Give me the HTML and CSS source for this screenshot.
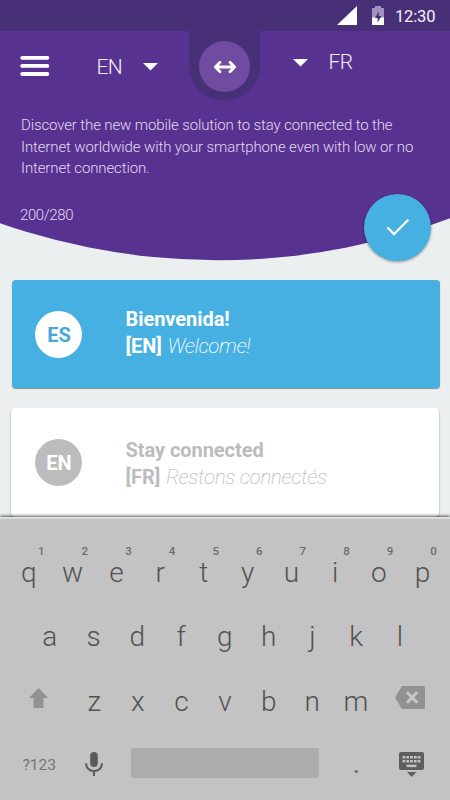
FILE: index.html
```html
<!DOCTYPE html>
<html lang="en">
<head>
<meta charset="utf-8">
<title>Translator</title>
<link rel="stylesheet" href="styles.css">
</head>
<body>
<div class="phone">
  <div class="status">
    <svg class="signal" width="20" height="19" viewBox="0 0 20 19"><path d="M20 0V19H0Z"/></svg>
    <svg class="battery" width="12" height="20" viewBox="0 0 12 20"><path class="dim" d="M3 2V0H9V2H12V13H0V2Z"/><path d="M0 11.5H12V19H0Z"/><path class="bolt" d="M6.7 5.5L3 12H5.6V16.5L9.5 10H6.7Z"/></svg>
    <span class="clock">12:30</span>
  </div>
  <header class="header">
    <svg class="arc" width="450" height="230" viewBox="0 31 450 230"><circle cx="218" cy="-400" r="660.3"/></svg>
    <div class="toolbar">
      <svg class="menu" width="30" height="22" viewBox="0 0 30 22"><path d="M2.2 2.8H27.4M2.2 10.9H27.4M2.2 19H27.4"/></svg>
      <span class="lang from">EN</span>
      <svg class="caret caret-from" width="15" height="8" viewBox="0 0 15 8"><path d="M0 0H15L7.5 7.5Z"/></svg>
      <div class="swap"><div class="swap-disc">
        <svg width="24" height="14" viewBox="0 0 24 14"><path d="M2.5 7H21.5M7 2.3L2.3 7L7 11.7M17 2.3L21.7 7L17 11.7"/></svg>
      </div></div>
      <svg class="caret caret-to" width="15" height="8" viewBox="0 0 15 8"><path d="M0 0H15L7.5 7.5Z"/></svg>
      <span class="lang to">FR</span>
    </div>
    <p class="message"><span>Discover the new mobile solution to stay connected to the</span><span>Internet worldwide with your smartphone even with low or no</span><span>Internet connection.</span></p>
    <div class="count">200/280</div>
    <div class="confirm"><svg width="24" height="19" viewBox="0 0 24 19"><path d="M1.5 9.5L8 16L22.3 1.7"/></svg></div>
  </header>
  <main class="cards">
    <article class="card active">
      <div class="badge">ES</div>
      <div class="text"><div class="title">Bienvenida!</div><div class="sub"><b>[EN]</b> <i>Welcome!</i></div></div>
    </article>
    <article class="card plain">
      <div class="badge">EN</div>
      <div class="text"><div class="title">Stay connected</div><div class="sub"><b>[FR]</b> <i>Restons connectés</i></div></div>
    </article>
  </main>
  <section class="keyboard">
    <div class="hints"><span>1</span><span>2</span><span>3</span><span>4</span><span>5</span><span>6</span><span>7</span><span>8</span><span>9</span><span>0</span></div>
    <div class="row r1"><span>q</span><span>w</span><span>e</span><span>r</span><span>t</span><span>y</span><span>u</span><span>i</span><span>o</span><span>p</span></div>
    <div class="row r2"><span>a</span><span>s</span><span>d</span><span>f</span><span>g</span><span>h</span><span>j</span><span>k</span><span>l</span></div>
    <div class="row r3">
      <svg class="shift" width="19" height="20" viewBox="0 0 19 20"><path d="M9.5 0L19 10H14.5V20H4.5V10H0Z"/></svg>
      <span>z</span><span>x</span><span>c</span><span>v</span><span>b</span><span>n</span><span>m</span>
      <svg class="delete" width="30" height="23" viewBox="0 0 30 23"><path d="M8 0H28.5Q30 0 30 1.5V21.5Q30 23 28.5 23H8Q7 23 6.4 22L0 11.5L6.4 1Q7 0 8 0Z"/><path class="x" d="M12 6.2L22.2 16.8M22.2 6.2L12 16.8"/></svg>
    </div>
    <div class="bottom">
      <span class="sym">?123</span>
      <svg class="mic" width="18" height="24" viewBox="0 0 18 24"><rect x="5.2" y="0" width="7.6" height="15" rx="3.8"/><path d="M1 11.2C1 16 4.5 19 9 19S17 16 17 11.2M9 19V24"/></svg>
      <div class="space"></div>
      <span class="dot">.</span>
      <svg class="kb" width="25" height="25" viewBox="0 0 25 25"><rect width="25" height="18" rx="2"/><path d="M8 20H17.5L12.7 25Z"/><path class="keys" d="M3.5 5.3H21.5M3.5 9.2H21.5"/><path class="bar" d="M7.5 13.9H17.5"/></svg>
    </div>
  </section>
</div>
</body>
</html>
```
FILE: styles.css
```css
* { box-sizing: border-box; }
body { margin: 0; font-family: Roboto, "Liberation Sans", sans-serif; }
.phone { width: 450px; height: 800px; overflow: hidden; background: #ebeff0; display: flex; flex-direction: column; }
svg { display: block; flex: none; }
span { white-space: nowrap; }

.status { height: 31px; background: #483078; display: flex; padding: 6px 0 0 337px; flex: none; }
.status svg { fill: #fff; }
.battery { margin-left: 15px; }
.battery .dim { fill: #a092bc; }
.battery .bolt { fill: #483078; }
.clock { margin: 1px 0 0 11px; width: 45px; font-size: 16.5px; line-height: 20px; font-weight: 400; letter-spacing: -0.15px; color: #f7f3fb; }

.header { position: relative; height: 230px; flex: none; color: #e4d9f0; }
.arc { position: absolute; left: 0; top: 0; fill: #573290; }
.toolbar { position: relative; height: 70px; display: flex; align-items: flex-start; }
.menu { margin: 24px 0 0 20px; fill: none; stroke: #fff; stroke-width: 3.8; stroke-linecap: round; }
.lang { font-size: 21px; line-height: 24px; font-weight: 300; color: #f4eef9; width: 28px; letter-spacing: -0.6px; }
.from { margin: 24px 0 0 46.5px; }
.caret { fill: #fff; }
.caret-from { margin: 32px 0 0 18px; }
.swap { width: 71px; height: 70px; margin-left: 31.5px; background: #483078; border-radius: 0 0 36px 36px; display: flex; justify-content: center; padding-top: 10px; }
.swap-disc { width: 51px; height: 51px; border-radius: 50%; background: #6f4c9f; display: flex; align-items: center; justify-content: center; padding-top: 1px; }
.swap svg { fill: none; stroke: #fff; stroke-width: 2.8; stroke-linecap: round; stroke-linejoin: round; }
.caret-to { margin: 28px 0 0 32.5px; }
.to { margin: 19px 0 0 21px; }
.message { position: relative; margin: 14px 0 0 21px; font-size: 15px; line-height: 21.6px; letter-spacing: -0.12px; font-weight: 300; display: flex; flex-direction: column; align-items: flex-start; }
.count { position: relative; margin: 25px 0 0 20px; font-size: 15px; line-height: 21px; letter-spacing: -0.4px; font-weight: 300; }
.confirm { position: absolute; left: 364px; top: 163px; width: 67px; height: 67px; border-radius: 50%; background: #47b0e2; box-shadow: 0 1px 3px rgba(0,0,0,.4); display: flex; align-items: center; justify-content: center; }
.confirm svg { fill: none; stroke: #fff; stroke-width: 2.3; }

.cards { padding: 19px 10px 0 12px; display: flex; flex-direction: column; gap: 20px; height: 256px; flex: none; }
.card { height: 109px; flex: none; border-radius: 4px; display: flex; padding-left: 23px; }
.active { background: #47b0e2; color: #fff; box-shadow: 0 1px 1px rgba(0,0,0,.4); height: 108px; }
.plain { background: #fff; color: #bcbcbc; box-shadow: 0 1px 2px rgba(0,0,0,.4); margin: 0 1px 0 -1px; padding-left: 24px; }
.badge { width: 47px; height: 47px; margin-top: 30.5px; border-radius: 50%; font-size: 20px; line-height: 48px; font-weight: 700; text-align: center; text-indent: 1px; background: #fff; color: #47a9d8; flex: none; }
.plain .badge { background: #bcbcbc; color: #fff; line-height: 49px; }
.text { margin: 26px 0 0 43.5px; font-size: 20px; line-height: 26.5px; white-space: nowrap; }
.plain .text { margin-top: 29px; }
.title, .sub b { font-weight: 700; letter-spacing: -0.05px; }
.sub i { font-weight: 100; -webkit-text-stroke: .2px currentColor; margin-left: 1px; }

.keyboard { flex: 1; background: #c3c3c3; border-top: 2px solid #dedede; box-shadow: 0 -1px 3px rgba(0,0,0,.65); position: relative; padding-left: 7px; color: #525252; }
.hints { display: grid; grid-template-columns: repeat(10, 43.6px); margin: 25px 0 0 12.5px; height: 14px; font-size: 11.5px; line-height: 14px; font-weight: 500; text-align: center; color: #6c6c6c; }
.row { display: grid; grid-template-columns: repeat(10, 43.75px); font-size: 28px; line-height: 32px; height: 32px; font-weight: 300; text-align: center; }
.r1 { margin-top: -1px; }
.r2 { grid-template-columns: repeat(9, 43.75px); margin: 32px 0 0 21px; }
.r3 { grid-template-columns: 65.5px repeat(7, 43.6px) 65px; margin-top: 33px; }
.shift { margin: 2px 0 0 22px; fill: #929292; }
.delete { margin: 0 0 0 17.5px; fill: #929292; }
.delete .x { fill: none; stroke: #c8c8c8; stroke-width: 2.8; }
.bottom { display: flex; align-items: flex-start; margin-top: 29px; }
.sym { width: 34px; margin: 8px 0 0 15.5px; font-size: 15.5px; line-height: 20px; color: #757575; }
.mic { margin: 5px 0 0 28.5px; fill: #5a5a5a; }
.mic path { fill: none; stroke: #5a5a5a; stroke-width: 2; }
.space { width: 188px; height: 30px; margin: 1px 0 0 28px; background: #acacac; border-radius: 2px; }
.dot { width: 10px; margin: 1px 0 0 32.5px; font-size: 28px; line-height: 32px; text-align: center; color: #6c6c6c; }
.kb { margin: 5px 0 0 37.5px; fill: #5e5e5e; }
.kb .keys { fill: none; stroke: #c3c3c3; stroke-width: 2.6; stroke-dasharray: 2.8 1; }
.kb .bar { fill: none; stroke: #c3c3c3; stroke-width: 2.4; }
```
